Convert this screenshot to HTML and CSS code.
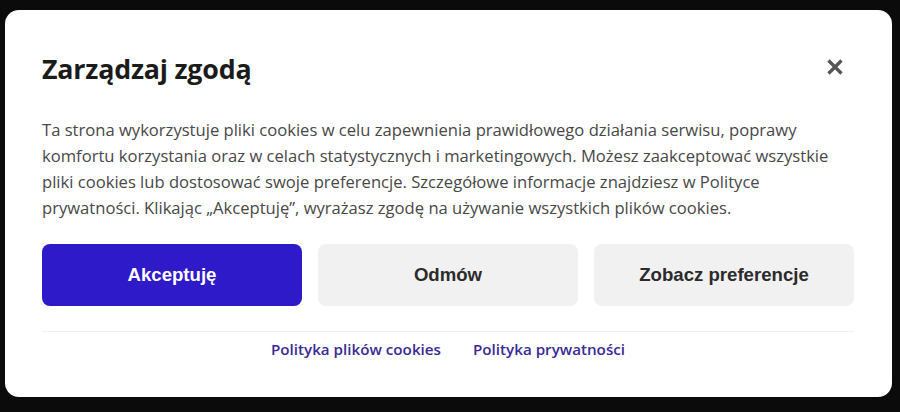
FILE: index.html
```html
<!DOCTYPE html>
<html lang="pl">
<head>
<meta charset="utf-8">
<title>Zarządzaj zgodą</title>
<link rel="stylesheet" href="styles.css">
</head>
<body>
<div class="dialog">
  <div class="header">
    <h2 class="title">Zarządzaj zgodą</h2>
    <button class="close" aria-label="Zamknij">
      <svg width="16" height="16" viewBox="0 0 16 16"><path d="M1.5 1.5 L14.5 14.5 M14.5 1.5 L1.5 14.5" stroke="#555" stroke-width="3.2" stroke-linecap="butt"/></svg>
    </button>
  </div>
  <p class="text">Ta strona wykorzystuje pliki cookies w celu zapewnienia prawidłowego działania serwisu, poprawy komfortu korzystania oraz w celach statystycznych i marketingowych. Możesz zaakceptować wszystkie pliki cookies lub dostosować swoje preferencje. Szczegółowe informacje znajdziesz w Polityce<br>prywatności. Klikając „Akceptuję”, wyrażasz zgodę na używanie wszystkich plików cookies.</p>
  <div class="buttons">
    <button class="btn btn-primary">Akceptuję</button>
    <button class="btn">Odmów</button>
    <button class="btn">Zobacz preferencje</button>
  </div>
  <div class="footer">
    <a href="#" class="link">Polityka plików cookies</a>
    <a href="#" class="link">Polityka prywatności</a>
  </div>
</div>
</body>
</html>
```
FILE: styles.css
```css
html, body {
  margin: 0;
  padding: 0;
  background: #0b0b0b;
  height: 100%;
}
body {
  padding: 10px 8px 15px 5px;
  box-sizing: border-box;
  font-family: "Open Sans", "Noto Sans", sans-serif;
}
.dialog {
  background: #fff;
  border-radius: 14px;
  padding: 0 38px 0 37px;
  height: 387px;
  box-sizing: border-box;
  display: flex;
  flex-direction: column;
}
.header {
  display: flex;
  align-items: center;
  justify-content: space-between;
  padding-top: 36px;
  height: 44px;
  box-sizing: content-box;
}
.title {
  margin: 0;
  font-size: 26.8px;
  font-weight: 700;
  color: #1b1b1b;
  letter-spacing: -0.2px;
}
.close {
  background: none;
  border: 0;
  padding: 0;
  margin-right: 11px;
  margin-bottom: 2px;
  width: 16px;
  height: 16px;
  display: flex;
}
.text {
  margin: 27px 0 0;
  font-size: 16.6px;
  line-height: 26px;
  color: #484848;
}
.buttons {
  display: grid;
  grid-template-columns: repeat(3, 1fr);
  gap: 16px;
  margin-top: 23px;
}
.btn {
  height: 62px;
  border: 0;
  border-radius: 8px;
  background: #f1f1f1;
  color: #2b2b2b;
  font-family: "Liberation Sans", Arial, sans-serif;
  font-weight: 700;
  font-size: 18.6px;
}
.btn-primary {
  background: #2e1ac8;
  color: #fff;
}
.footer {
  margin-top: 25px;
  border-top: 1px solid #f0f0f0;
  display: flex;
  justify-content: center;
  gap: 32px;
  padding-top: 6px;
}
.link {
  color: #3a2a96;
  text-decoration: none;
  font-size: 15.2px;
  font-weight: 600;
  line-height: 22px;
}
```
